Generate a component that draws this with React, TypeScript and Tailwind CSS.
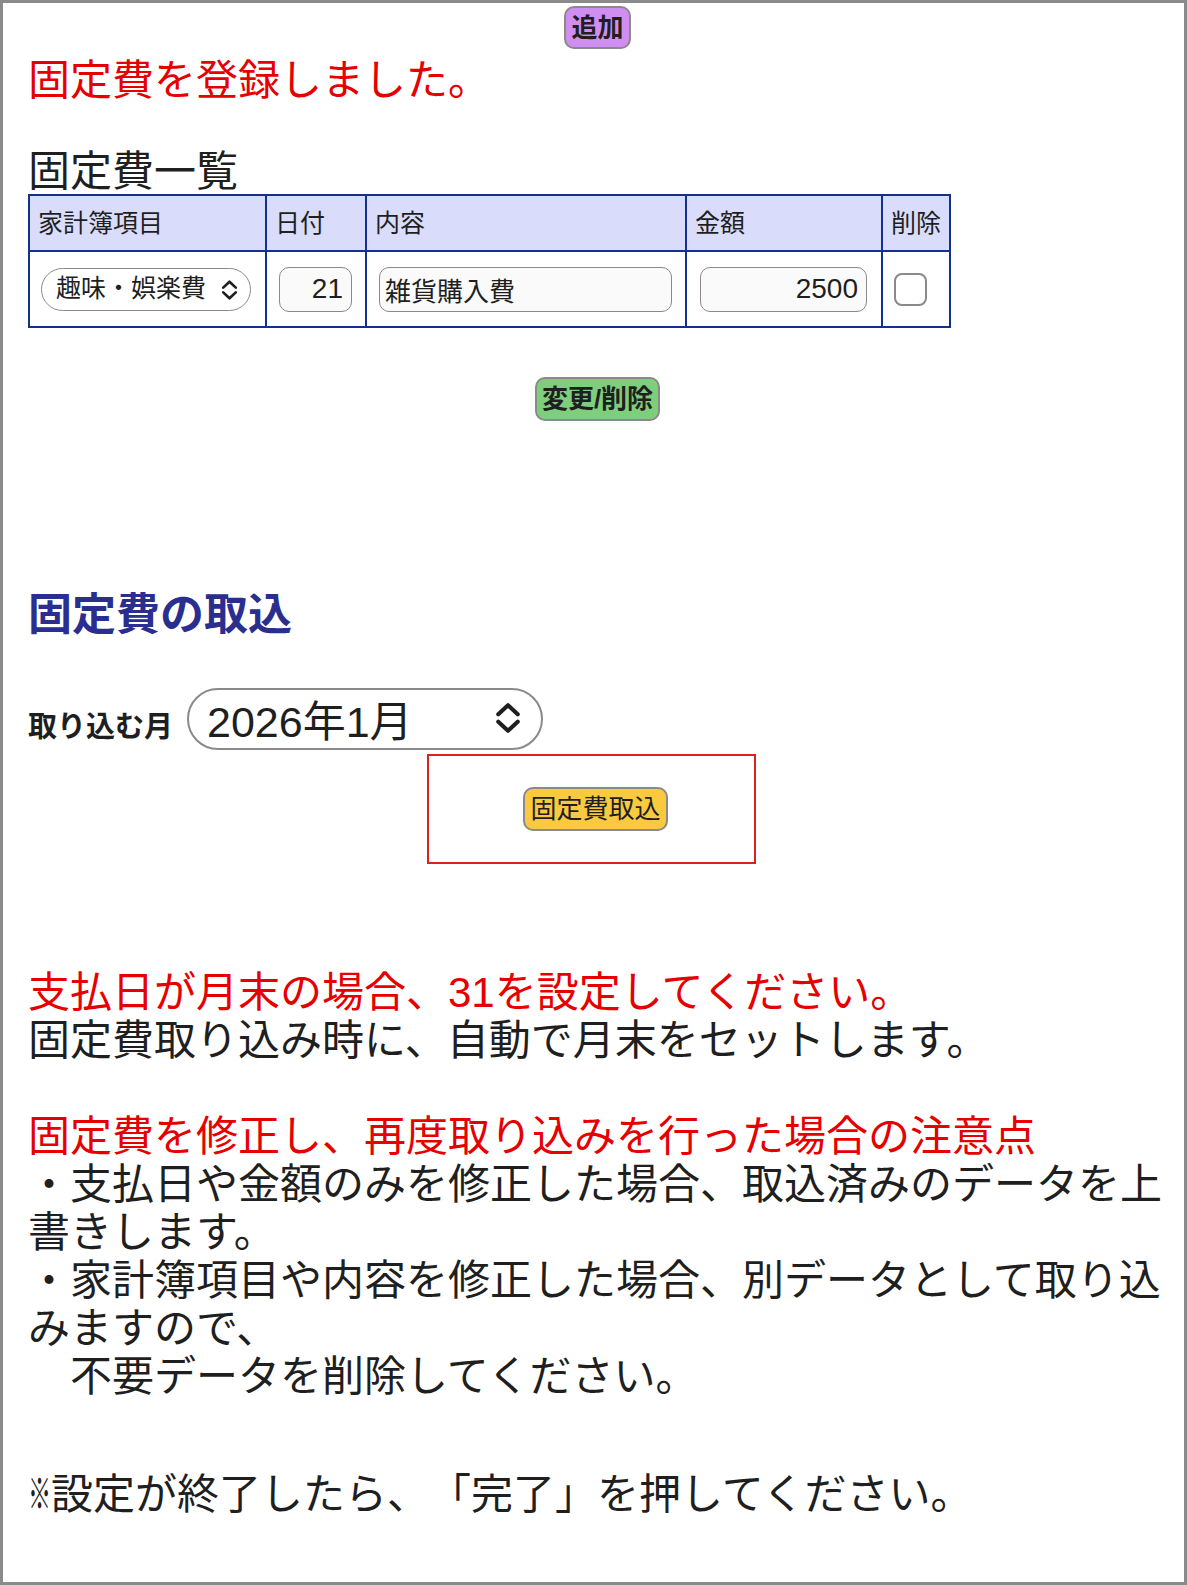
import { useState } from "react";

const FONT = "'Liberation Sans', 'Noto Sans CJK JP', sans-serif";

function UpDown({ className }: { className?: string }) {
  return (
    <svg viewBox="0 0 24 28" className={className} fill="none" stroke="currentColor" strokeWidth={3.4} strokeLinecap="round" strokeLinejoin="round">
      <path d="M4 11 L12 3.5 L20 11" />
      <path d="M4 17 L12 24.5 L20 17" />
    </svg>
  );
}

export default function App() {
  const [category, setCategory] = useState("趣味・娯楽費");
  const [month, setMonth] = useState("2026-01");
  const [checked, setChecked] = useState(false);

  return (
    <div
      className="h-[1585px] border-[3px] border-[#8a8a8a] bg-white pl-[25px] pr-[17px] text-[#1f1f1f] [text-spacing-trim:space-all]"
      style={{ fontFamily: FONT }}
    >
      {/* add */}
      <div className="flex justify-center pt-[3px]">
        <button className="h-[43px] rounded-[10px] border-2 border-[#8a8a8a] bg-[#d08ef0] px-[5px] text-[26px] font-bold leading-none">
          追加
        </button>
      </div>

      <p className="mt-[8px] text-[42px] leading-[48px] text-[#e60000]">固定費を登録しました。</p>

      <h3 className="mt-[41px] pt-[4px] text-[42px] leading-[44px]">固定費一覧</h3>

      <table className="w-[921px] table-fixed border-collapse border-2 border-[#13318a] text-[25px]">
        <colgroup>
          <col className="w-[237px]" />
          <col className="w-[100px]" />
          <col className="w-[320px]" />
          <col className="w-[196px]" />
          <col className="w-[68px]" />
        </colgroup>
        <thead>
          <tr className="h-[56px] bg-[#d9dcfb]">
            {["家計簿項目", "日付", "内容", "金額", "削除"].map((h) => (
              <th key={h} className="border-2 border-[#13318a] px-[8px] text-left font-normal leading-none">
                {h}
              </th>
            ))}
          </tr>
        </thead>
        <tbody>
          <tr className="h-[76px]">
            <td className="border-2 border-[#13318a] px-[11px]">
              <div className="relative w-[210px]">
                <select
                  value={category}
                  onChange={(e) => setCategory(e.target.value)}
                  className="h-[43px] w-full appearance-none rounded-full border-[1.5px] border-[#8a8a8a] bg-white pl-[14px] text-[25px] outline-none"
                >
                  <option>趣味・娯楽費</option>
                  <option>食費</option>
                  <option>日用品費</option>
                </select>
                <UpDown className="pointer-events-none absolute right-[11px] top-[11px] h-[22px] w-[21px]" />
              </div>
            </td>
            <td className="border-2 border-[#13318a] px-[12px]">
              <input
                defaultValue="21"
                className="h-[45px] w-[73px] rounded-[10px] border-[1.5px] border-[#8a8a8a] bg-[#fafafa] px-[8px] text-right text-[28px] outline-none"
              />
            </td>
            <td className="border-2 border-[#13318a] px-[12px]">
              <input
                defaultValue="雑貨購入費"
                className="h-[45px] w-[293px] rounded-[10px] border-[1.5px] border-[#8a8a8a] bg-[#fafafa] px-[5px] text-[26px] outline-none"
              />
            </td>
            <td className="border-2 border-[#13318a] px-[13px]">
              <input
                defaultValue="2500"
                className="h-[45px] w-[167px] rounded-[10px] border-[1.5px] border-[#8a8a8a] bg-[#fafafa] px-[8px] text-right text-[28px] outline-none"
              />
            </td>
            <td className="border-2 border-[#13318a] px-[11px]">
              <input
                type="checkbox"
                checked={checked}
                onChange={(e) => setChecked(e.target.checked)}
                className="block h-[33px] w-[33px] appearance-none rounded-[8px] border-[2.5px] border-[#8a8a8a] bg-white checked:bg-[#1a73e8]"
              />
            </td>
          </tr>
        </tbody>
      </table>

      <div className="mt-[49px] flex justify-center">
        <button className="h-[44px] rounded-[10px] border-2 border-[#8a8a8a] bg-[#7dce7d] px-[5px] text-[26px] font-bold leading-none">
          変更/削除
        </button>
      </div>

      <h2 className="mt-[168px] text-[44px] font-bold leading-[52px] text-[#2a2f8f]">固定費の取込</h2>

      <div className="mt-[47px] flex items-baseline gap-[14px]">
        <label className="text-[29px] font-bold">取り込む月</label>
        <div className="relative w-[356px]">
          <select
            value={month}
            onChange={(e) => setMonth(e.target.value)}
            className="h-[62px] w-full appearance-none rounded-full border-2 border-[#8a8a8a] bg-white pl-[18px] text-[43px] outline-none"
          >
            <option value="2026-01">2026年1月</option>
            <option value="2026-02">2026年2月</option>
            <option value="2026-03">2026年3月</option>
          </select>
          <UpDown className="pointer-events-none absolute right-[19px] top-[13px] h-[34px] w-[32px]" />
        </div>
      </div>

      <div className="ml-[399px] mt-[4px] flex h-[110px] w-[329px] items-center justify-center border-2 border-[#e21d1d] pl-[8px]">
        <button className="h-[44px] rounded-[10px] border-2 border-[#8a8a8a] bg-[#f9c940] px-[5px] text-[26px] leading-none">
          固定費取込
        </button>
      </div>

      <div className="mt-[105px] text-[42px] leading-[48px]">
        <span className="text-[#e60000]">支払日が月末の場合、31を設定してください。</span>
        <br />
        固定費取り込み時に、自動で月末をセットします。
        <br />
        <br />
        <span className="text-[#e60000]">固定費を修正し、再度取り込みを行った場合の注意点</span>
        <br />
        ・支払日や金額のみを修正した場合、取込済みのデータを上書きします。
        <br />
        ・家計簿項目や内容を修正した場合、別データとして取り込みますので、
        <br />
        {"\u3000不要データを削除してください。"}
      </div>

      <p className="mt-[70px] text-[42px] leading-[48px]">
        <span className="inline-block w-[23px]">
          <span className="inline-block origin-left scale-x-[0.55]">※</span>
        </span>
        設定が終了したら、「完了」を押してください。
      </p>
    </div>
  );
}
